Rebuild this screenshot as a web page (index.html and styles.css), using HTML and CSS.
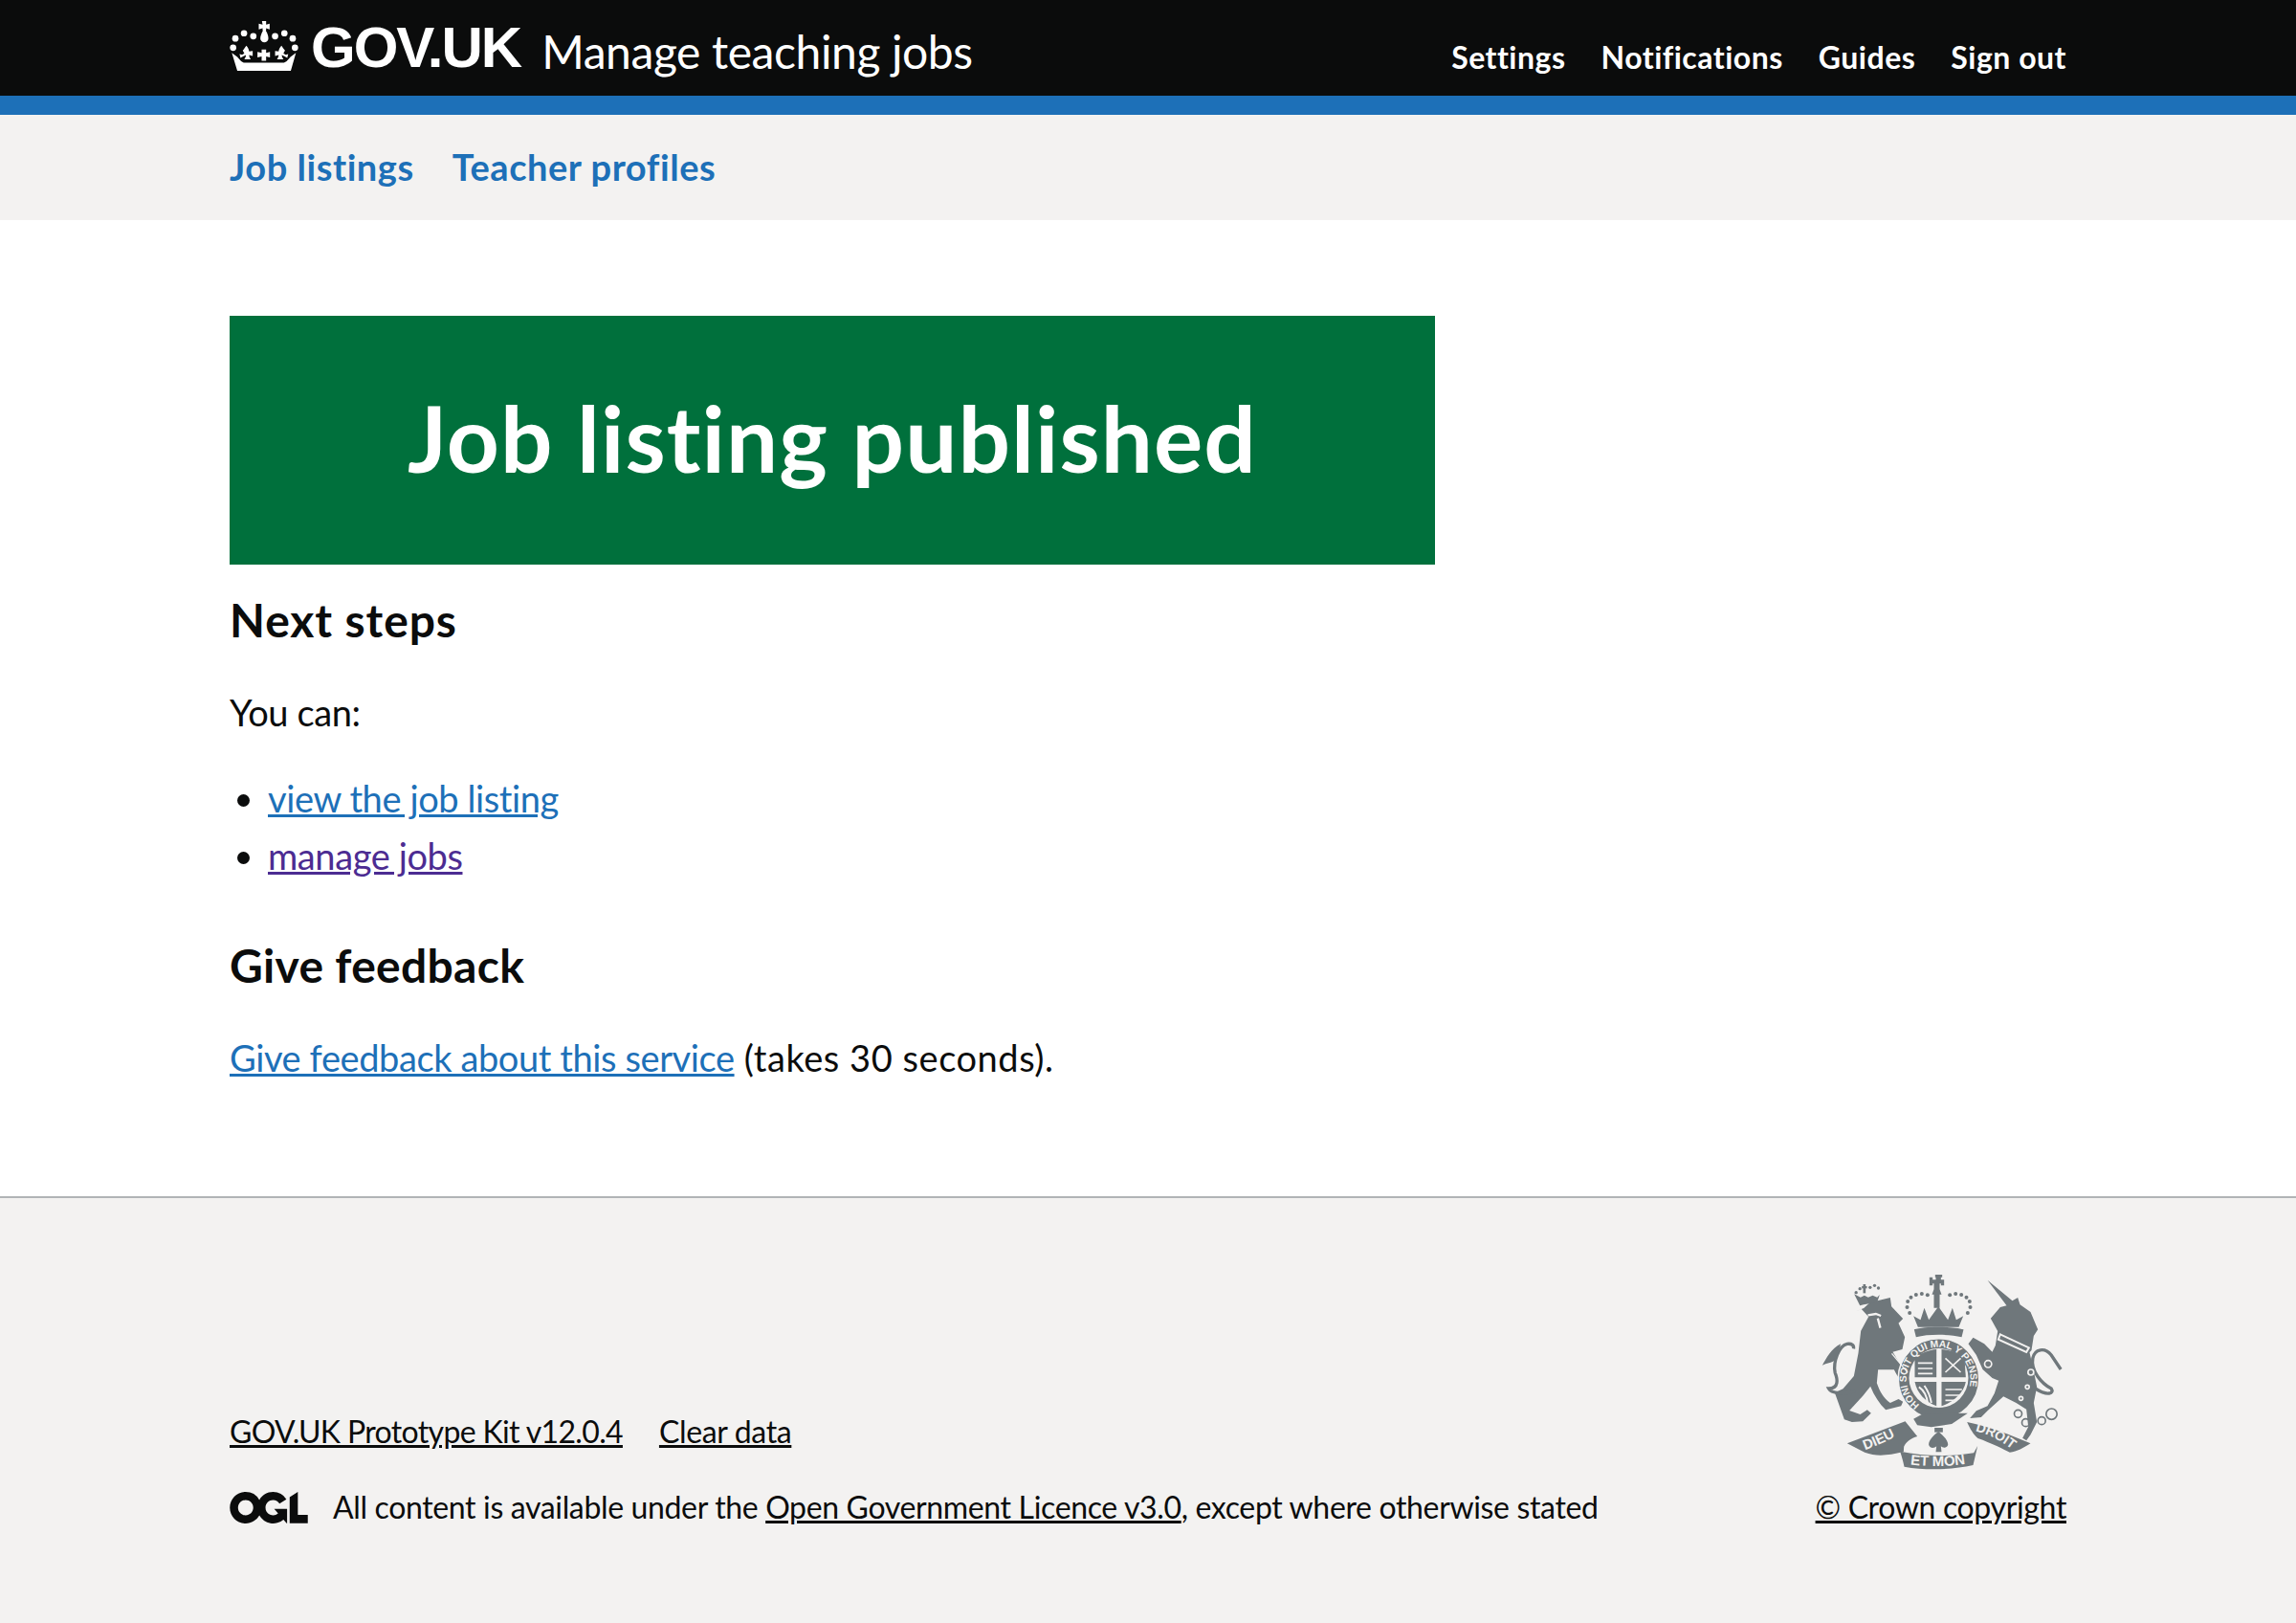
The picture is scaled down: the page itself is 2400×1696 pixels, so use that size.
FILE: index.html
```html
<!DOCTYPE html>
<html lang="en">
<head>
    <meta charset="UTF-8">
    <title>Job listing published - Manage teaching jobs</title>
    <link rel="stylesheet" href="styles.css">
</head>
<body>
    <!-- black header -->
    <header class="header">
        <div class="container header-inner">
            <a href="#" class="logo">
                <svg class="crown" viewBox="60 35 215 155" aria-hidden="true">
                    <g fill="#fff">
                        <circle cx="78" cy="89" r="10"/><circle cx="105" cy="73" r="10"/><circle cx="134" cy="82" r="10"/>
                        <circle cx="202" cy="82" r="10"/><circle cx="231" cy="73" r="10"/><circle cx="257" cy="89" r="10"/>
                        <circle cx="71" cy="118" r="10"/><circle cx="264" cy="118" r="10"/>
                        <path d="M161 35h13v11l11-3v18l-11-4v6l-1 2c6 10 8 17 8 24a11 11 0 0 1-25 0c0-7 3-14 8-24l-1-2v-6l-12 4V43l12 3z"/>
                        <path d="M112 112c5 5 8 10 9 18l11-2v16l-11-3c0 5 2 9 5 13h-20c3-4 5-8 5-13l-9 4-8 5-3-12 8 2 7-4-5-9c4-4 7-9 11-15z"/>
                        <path d="M160 124h14v10l12-3v17l-12-3v14h-14v-14l-13 3v-17l13 3z"/>
                        <path d="M222 112c4 6 7 11 11 15l-5 9 7 4 8-2-3 12-8-5-9-4c0 5 2 9 5 13h-20c3-4 5-8 5-13l-11 3v-16l11 2c1-8 4-13 9-18z"/>
                        <path d="M67 134l17 13 12 13 8 5h126l8-5 12-13 17-13-16 56H84z"/>
                    </g>
                </svg>
                <span class="logotype">GOV.UK</span>
            </a>
            <a href="#" class="service-name">Manage teaching jobs</a>
            <nav class="header-nav">
                <a href="#">Settings</a>
                <a href="#">Notifications</a>
                <a href="#">Guides</a>
                <a href="#">Sign out</a>
            </nav>
        </div>
    </header>

    <!-- sub navigation -->
    <nav class="subnav">
        <div class="container subnav-inner">
            <a href="#">Job listings</a>
            <a href="#">Teacher profiles</a>
        </div>
    </nav>

    <main class="container main">
        <div class="panel">
            <h1>Job listing published</h1>
        </div>

        <h2 class="next-heading">Next steps</h2>
        <p class="you-can">You can:</p>
        <ul class="steps">
            <li><a href="#">view the job listing</a></li>
            <li><a href="#" class="visited">manage jobs</a></li>
        </ul>

        <h2 class="feedback-heading">Give feedback</h2>
        <p class="feedback"><a href="#">Give feedback about this service</a> (takes 30 seconds).</p>
    </main>

    <footer class="footer">
        <div class="container footer-inner">
            <div class="footer-left">
                <div class="footer-links">
                    <a href="#" class="kit-link">GOV.UK Prototype Kit v12.0.4</a>
                    <a href="#">Clear data</a>
                </div>
                <div class="licence">
                    <svg class="ogl" viewBox="0 0 483.2 195.7" aria-hidden="true">
                        <path fill="#0b0c0c" d="M421.5 142.8V.1l-50.7 32.3v161.1h112.4v-50.7zm-122.3-9.6A47.12 47.12 0 0 1 221 97.8c0-26 21.1-47.1 47.1-47.1 16.7 0 31.4 8.7 39.7 21.8l42.7-27.2A97.63 97.63 0 0 0 268.1 0c-36.5 0-68.3 20.1-85.1 49.7A98 98 0 0 0 97.8 0C43.9 0 0 43.9 0 97.8s43.9 97.8 97.8 97.8c36.5 0 68.3-20.1 85.1-49.7a97.76 97.76 0 0 0 149.6 25.4l19.4 22.2h3v-87.8h-80l24.3 27.5zM97.8 145c-26 0-47.1-21.1-47.1-47.1s21.1-47.1 47.1-47.1 47.2 21 47.2 47S123.8 145 97.8 145"/>
                    </svg>
                    <span>All content is available under the <a href="#">Open Government Licence v3.0</a>, except where otherwise stated</span>
                </div>
            </div>
            <div class="footer-right">
                <svg class="arms" viewBox="70 65 755 615" aria-hidden="true">
                    <defs>
                        <path id="garter-ring" d="M377 476A100 100 0 1 1 499 473"/>
                        <path id="ribbon-left" d="M206 618C250 602 290 582 326 562"/>
                        <path id="ribbon-mid" d="M348 663C400 670 480 670 526 660"/>
                        <path id="ribbon-right" d="M552 558C590 566 635 590 672 620"/>
                    </defs>
                    <g fill="#6f777b">
                        <!-- lion -->
                        <path d="M172 185l30-12 20-18 35-8 28-7 4 28 36 38-14 14 20 44-8 38-30 8c14 25 32 50 50 80l-12 24c-14-12-25-30-34-48l-50 0-4 42c10 28 20 46 42 62l26-12 14 8-6 14-48 12c-20-20-36-44-48-74l-24 30-42 46 34 12 22-14 12 10-26 26-34 2-24-8-30-84 26-12 34-40 14-72 8-70 24-44-22-24z"/>
                        <path d="M130 285c-30 15-45 45-58 67 13-7 28-7 43-17z"/>
                        <!-- lion's crown -->
                        <path d="M190 165l-18-36 20 10 12-6 12 6 14-6 14 6 8-8-8 24c-20 2-40 6-54 10z"/>
                        <rect x="200" y="98" width="8" height="28"/><rect x="196" y="104" width="16" height="7"/>
                        <circle cx="178" cy="124" r="5"/><circle cx="190" cy="112" r="5"/><circle cx="222" cy="108" r="5"/><circle cx="236" cy="102" r="5"/><circle cx="248" cy="110" r="5"/>
                        <!-- royal crown -->
                        <path d="M426 68h22v8h-4v8h10V76h-0v26h-10v-6h-4v18l6 16h-6v42h-18v-42h-6l6-16V96h-4v6h-10V76h10v8h10v-8h-2z"/>
                        <path d="M358 198l22 12 12-38 14 38 30-42 30 42 14-38 12 38 22-12-14 34H372z"/>
                        <path d="M360 240c30-10 125-10 155 0l-6 24c-40-10-105-10-143 0z"/>
                        <circle cx="338" cy="170" r="6"/><circle cx="340" cy="152" r="6"/><circle cx="350" cy="139" r="6"/><circle cx="366" cy="131" r="6"/><circle cx="384" cy="128" r="6"/><circle cx="402" cy="132" r="6"/>
                        <circle cx="472" cy="132" r="6"/><circle cx="490" cy="128" r="6"/><circle cx="508" cy="131" r="6"/><circle cx="524" cy="139" r="6"/><circle cx="534" cy="152" r="6"/><circle cx="536" cy="170" r="6"/>
                        <circle cx="346" cy="188" r="6"/><circle cx="528" cy="188" r="6"/>
                        <!-- unicorn -->
                        <path d="M590 85l78 65 17-10 7 22 33 23 23 55-13 20-7 45-6 7 13 58 10 50-10 50 10 60-20 40-13 18-12-8 18-35-6-55-32-20-40-20-50 45-20 20-35 3 20-23 35-15 22-40 13-40-20-8-30-27-20-45-25-35 15-20 35 20 25 25 10-20 7-45-22-40 30-35 20-5z"/>
                        <!-- garter with buckle -->
                        <circle cx="437" cy="395" r="127" stroke="#f3f2f1" stroke-width="5"/>
                        <path d="M358 520l30-16 140-2-50 34-64 10-44-6z"/>
                        <!-- motto ribbon -->
                        <path d="M150 597l182-69 38 47c-20 6-36 18-42 32l-1 16c-50 12-84 16-122 2z"/>
                        <path d="M316 622c6 18 10 34 13 48 66 12 150 10 216-5l14-60-12 22c-70 12-160 10-231-5z"/>
                        <path d="M526 530c70 14 135 40 199 67-22 14-42 26-65 28-16-8-60-30-100-44-14-12-24-28-34-51z"/>
                        <!-- fleur below the garter -->
                        <path d="M436 560c16 12 32 30 30 42-4 12-18 8-22 4l2 18h-18l2-18c-6 6-20 8-24-4-2-12 14-30 30-42z"/>
                        <rect x="424" y="548" width="26" height="14"/>
                    </g>
                    <g fill="none" stroke="#6f777b">
                        <!-- tails -->
                        <path d="M175 432c-35 13-75 8-83-7 33 0 28-30 20-50-7-35 13-85 38-90 15-2 22 5 20 15" stroke-width="10"/>
                        <path d="M740 425c40 25 60 15 50 0-30-15-65-55-58-95 6-30 38-35 58-10l30 45" stroke-width="10"/>
                        <circle cx="686" cy="504" r="12" stroke-width="5"/><circle cx="710" cy="532" r="12" stroke-width="5"/>
                        <circle cx="760" cy="526" r="12" stroke-width="5"/><circle cx="791" cy="505" r="17" stroke-width="5"/>
                    </g>
                    <!-- shield -->
                    <circle cx="437" cy="392" r="93" fill="#f3f2f1"/>
                    <g fill="#6f777b">
                        <path d="M362 330c20-18 45-26 68-28v88h-68z"/>
                        <path d="M446 302c30 2 55 12 72 30l4 58h-76z"/>
                        <path d="M362 404h68v76c-34-14-60-38-68-76z"/>
                        <path d="M446 404h76c-6 34-40 64-76 76z"/>
                    </g>
                    <g fill="none" stroke="#f3f2f1">
                        <path d="M372 345h46M372 362h46M372 378h46M458 330l48 44M506 330l-48 44M458 428h52M458 446h46M458 462h36" stroke-width="5"/>
                        <path d="M375 420c15 10 25 30 28 52M392 416c10 14 18 30 22 54" stroke-width="6"/>
                        <path d="M215 195l25-4 16 6M246 205l8 30" stroke-width="7"/>
                        <path d="M290 315l50 60" stroke-width="4"/>
                        <path d="M630 255l90 42-8 14-88-40z" stroke-width="6"/>
                        <circle cx="604" cy="264" r="11" stroke-width="5"/>
                        <circle cx="592" cy="348" r="11" stroke-width="5"/>
                        <circle cx="726" cy="374" r="9" stroke-width="5"/>
                        <circle cx="715" cy="420" r="6" stroke-width="5"/>
                        <circle cx="695" cy="456" r="6" stroke-width="5"/>
                    </g>
                    <g class="arms-text">
                        <text font-size="31"><textPath href="#garter-ring">HONI SOIT QUI MAL Y PENSE</textPath></text>
                        <text font-size="44"><textPath href="#ribbon-left">DIEU</textPath></text>
                        <text font-size="45"><textPath href="#ribbon-mid">ET MON</textPath></text>
                        <text font-size="42"><textPath href="#ribbon-right">DROIT</textPath></text>
                    </g>
                </svg>
                <a href="#" class="copyright">© Crown copyright</a>
            </div>
        </div>
    </footer>
</body>
</html>
```

FILE: styles.css
```css
html, body {
    margin: 0;
    padding: 0;
}

body {
    font-family: "Lato", "Noto Sans", sans-serif;
    font-variant-ligatures: none;
    color: #0b0c0c;
    background-color: #fff;
    font-size: 38px;
    line-height: 50px;
    letter-spacing: -0.4px;
}

.container {
    width: 1920px;
    margin: 0 auto;
}

/* header */
.header {
    background-color: #0b0c0c;
    border-bottom: 20px solid #1d70b8;
    height: 100px;
}

.header-inner {
    display: flex;
    align-items: flex-start;
    height: 100px;
}

.header a {
    color: #fff;
    text-decoration: none;
}

.logo {
    display: flex;
    align-items: flex-start;
    padding-top: 22px;
}

.crown {
    width: 72px;
    height: 52px;
}

.logotype {
    font-family: "Liberation Sans", sans-serif;
    font-weight: 700;
    font-size: 60px;
    line-height: 56px;
    letter-spacing: -2px;
    margin-left: 13px;
}

.service-name {
    font-size: 48px;
    line-height: 60px;
    margin-left: 22px;
    padding-top: 24px;
}

.header-nav {
    display: flex;
    gap: 37px;
    margin-left: auto;
    padding-top: 36px;
    font-size: 32px;
    line-height: 48px;
    font-weight: 700;
    letter-spacing: 0.5px;
}

/* sub navigation */
.subnav {
    background-color: #f3f2f1;
    height: 110px;
}

.subnav-inner {
    display: flex;
    gap: 40px;
    padding-top: 29px;
    font-size: 38px;
    line-height: 50px;
    font-weight: 700;
    letter-spacing: 0.55px;
}

.subnav a {
    color: #1d70b8;
    text-decoration: none;
}

/* page content */
.main {
    padding-top: 100px;
    padding-bottom: 120px;
}

.panel {
    box-sizing: border-box;
    width: 1260px;
    height: 260px;
    padding-top: 67px;
    background-color: #00703c;
    color: #fff;
    text-align: center;
}

h1 {
    margin: 0;
    font-size: 96px;
    line-height: 120px;
    font-weight: 700;
    letter-spacing: 1.1px;
}

h2 {
    margin: 0;
    font-size: 48px;
    line-height: 60px;
    font-weight: 700;
}

p {
    margin: 0;
}

a {
    color: #1d70b8;
}

a.visited {
    color: #4c2c92;
}

.next-heading {
    margin-top: 28px;
    letter-spacing: 0.9px;
}

.you-can {
    margin-top: 41px;
}

.steps {
    margin: 40px 0 0;
    padding: 0 0 0 40px;
}

.steps li {
    margin-bottom: 10px;
}

.feedback-heading {
    margin-top: 60px;
    letter-spacing: 0.3px;
}

.feedback {
    margin-top: 41px;
    letter-spacing: 0.55px;
}

.feedback a {
    letter-spacing: -0.4px;
}

/* footer */
.footer {
    background-color: #f3f2f1;
    border-top: 2px solid #b1b4b6;
    height: 445px;
    font-size: 32px;
    line-height: 44px;
    letter-spacing: -0.35px;
}

.footer a {
    color: #0b0c0c;
}

.footer-inner {
    display: flex;
    justify-content: space-between;
}

.footer-left {
    padding-top: 222px;
}

.footer-links {
    display: flex;
    gap: 38px;
}

.footer-links .kit-link {
    letter-spacing: -0.65px;
}

.licence {
    display: flex;
    align-items: center;
    gap: 26px;
    margin-top: 35px;
}

.ogl {
    width: 82px;
    height: 33px;
}

.footer-right {
    display: flex;
    flex-direction: column;
    align-items: flex-end;
    padding-top: 79px;
}

.arms {
    width: 252px;
    height: 205px;
    margin-right: 4px;
}

.arms-text {
    font-family: "Liberation Sans", sans-serif;
    font-weight: 700;
    fill: #f3f2f1;
}

.copyright {
    margin-top: 17px;
}
```
